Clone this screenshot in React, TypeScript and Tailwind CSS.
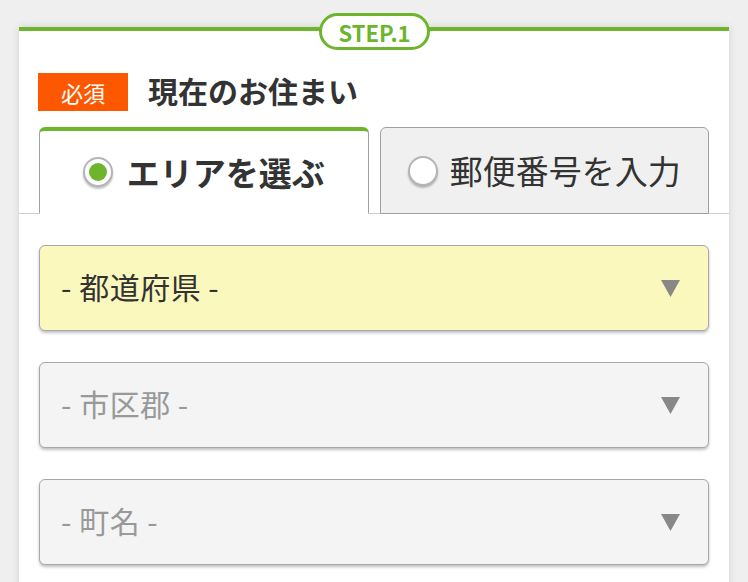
import { useState } from "react";

const font = { fontFamily: '"Noto Sans CJK JP", "Noto Sans", sans-serif' };

function Radio({ checked }: { checked: boolean }) {
  return (
    <span className="flex h-[30px] w-[30px] items-center justify-center rounded-full border-2 border-[#b5b5b5] bg-white shadow-[0_2px_2px_rgba(0,0,0,0.25)]">
      {checked && <span className="h-[18px] w-[18px] rounded-full bg-[#6cb52c]" />}
    </span>
  );
}

function SelectBox({ label, active }: { label: string; active?: boolean }) {
  return (
    <div
      className={`flex h-[86px] items-center justify-between rounded-[6px] border border-[#a8a8a8] pl-[21px] pr-[28px] shadow-[0_2px_3px_rgba(0,0,0,0.25)] ${
        active ? "bg-[#fbf8bd] text-[#333]" : "bg-[#f4f4f4] text-[#999]"
      }`}
    >
      <span className="pb-[5px] text-[30px] leading-none tracking-[0.5px]">{label}</span>
      <svg width="19" height="17" viewBox="0 0 19 17">
        <polygon points="0,0 19,0 9.5,17" fill="#888" />
      </svg>
    </div>
  );
}

export default function App() {
  const [tab, setTab] = useState(0);

  return (
    <div className="h-[582px] w-[748px] overflow-hidden bg-[#efefef] pt-[27px]" style={font}>
      <div className="relative ml-[19px] w-[710px] border-t-4 border-[#6cb52c] bg-white pb-10 shadow-[0_0_8px_rgba(0,0,0,0.12)]">
        {/* STEP バッジ */}
        <div className="absolute left-[300px] top-[-18px] flex h-[37px] w-[111px] items-center justify-center rounded-full border-[3px] border-[#6cb52c] bg-white">
          <span className="text-[22px] font-bold leading-none text-[#6cb52c]">STEP.1</span>
        </div>

        <div className="flex items-center gap-[20px] pl-[19px] pt-[42px]">
          <span className="flex h-[38px] w-[90px] items-center justify-center bg-[#fd5800] text-[22px] text-white">
            必須
          </span>
          <h2 className="pb-[4px] text-[30px] font-bold leading-none text-[#333]">現在のお住まい</h2>
        </div>

        {/* タブ */}
        <div className="mt-[16px] flex gap-[11px] border-b border-[#cfcfcf] px-[20px]">
          <button
            onClick={() => setTab(0)}
            className={`-mb-px flex h-[87px] w-[330px] items-center justify-center gap-[14px] rounded-t-[6px] border ${
              tab === 0
                ? "border-[#a0a0a0] border-b-white border-t-4 border-t-[#6cb52c] bg-white font-bold"
                : "border-[#a0a0a0] bg-[#f0f0f0]"
            } text-[33px] leading-none text-[#333]`}
          >
            <Radio checked={tab === 0} />
            エリアを選ぶ
          </button>
          <button
            onClick={() => setTab(1)}
            className={`-mb-px flex h-[87px] w-[330px] items-center justify-center gap-[12px] rounded-t-[6px] border ${
              tab === 1
                ? "border-[#a0a0a0] border-b-white border-t-4 border-t-[#6cb52c] bg-white font-bold"
                : "border-[#a0a0a0] bg-[#f0f0f0]"
            } text-[33px] leading-none text-[#333]`}
          >
            <Radio checked={tab === 1} />
            郵便番号を入力
          </button>
        </div>

        <div className="flex flex-col gap-[31px] px-[20px] pt-[31px]">
          <SelectBox label="- 都道府県 -" active />
          <SelectBox label="- 市区郡 -" />
          <SelectBox label="- 町名 -" />
        </div>
      </div>
    </div>
  );
}
